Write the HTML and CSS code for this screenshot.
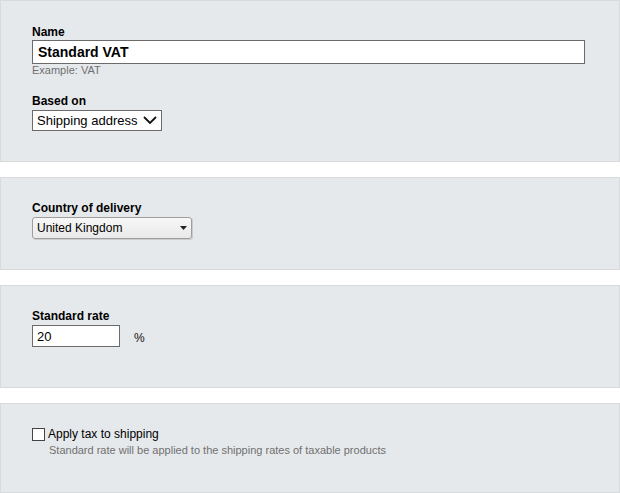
FILE: index.html
```html
<!DOCTYPE html>
<html>
<head>
<meta charset="utf-8">
<link rel="stylesheet" href="styles.css">
</head>
<body>
<section class="panel panel-name">
  <label class="field-label" for="name">Name</label>
  <input class="text-input name-input" id="name" type="text" value="Standard VAT">
  <div class="hint">Example: VAT</div>
  <label class="field-label based-label" for="based">Based on</label>
  <div class="select-wrap plain">
    <select id="based" class="plain-select"><option>Shipping address</option></select>
    <svg class="chev" width="14" height="8" viewBox="0 0 14 8"><path d="M1 1 L7 7 L13 1" fill="none" stroke="#111" stroke-width="1.8"/></svg>
  </div>
</section>

<section class="panel panel-country">
  <label class="field-label" for="country">Country of delivery</label>
  <div class="select-wrap rounded">
    <select id="country" class="round-select"><option>United Kingdom</option></select>
    <svg class="tri" width="7" height="4" viewBox="0 0 7 4"><path d="M0 0 H7 L3.5 4 Z" fill="#222"/></svg>
  </div>
</section>

<section class="panel panel-rate">
  <label class="field-label" for="rate">Standard rate</label>
  <div class="rate-row">
    <input class="text-input rate-input" id="rate" type="text" value="20">
    <span class="pct">%</span>
  </div>
</section>

<section class="panel panel-ship">
  <div class="check-row">
    <input type="checkbox" id="ship" class="check">
    <label for="ship" class="check-label">Apply tax to shipping</label>
  </div>
  <div class="hint ship-hint">Standard rate will be applied to the shipping rates of taxable products</div>
</section>
</body>
</html>
```

FILE: styles.css
```css
html, body {
  margin: 0;
  padding: 0;
  background: #ffffff;
}
body {
  font-family: "Liberation Sans", Arial, sans-serif;
  color: #111;
  width: 620px;
}
.panel {
  box-sizing: border-box;
  border: 1px solid #d9dadb;
  background: #e6e9ec;
  padding: 23px 31px 0 31px;
  margin-bottom: 15px;
  display: flex;
  flex-direction: column;
  align-items: flex-start;
}
.panel-name { height: 162px; padding-top: 24px; }
.panel-country { height: 93px; }
.panel-rate { height: 103px; }
.panel-ship { height: 90px; padding-top: 23px; margin-bottom: 0; }

.field-label {
  display: block;
  font-size: 12px;
  line-height: 14px;
  font-weight: bold;
  margin-bottom: 1px;
  color: #000;
}
.based-label { margin-top: 17px; margin-bottom: 2px; }

.text-input {
  box-sizing: border-box;
  border: 1px solid #6b6b6b;
  background: #fff;
  font-family: "Liberation Sans", Arial, sans-serif;
  outline: none;
  margin: 0;
  border-radius: 0;
}
.name-input {
  width: 553px;
  height: 24px;
  padding: 0 5px;
  font-size: 14px;
  font-weight: bold;
  color: #000;
}
.hint {
  font-size: 11px;
  line-height: 13px;
  color: #707070;
}

.select-wrap { position: relative; }
.plain-select {
  appearance: none;
  -webkit-appearance: none;
  box-sizing: border-box;
  width: 130px;
  height: 21px;
  margin: 0;
  border: 1px solid #6b6b6b;
  border-radius: 0;
  background: #fff;
  font-family: "Liberation Sans", Arial, sans-serif;
  font-size: 13px;
  color: #000;
  padding: 0 0 0 4px;
  outline: none;
}
.chev { position: absolute; left: 111px; top: 6px; }

.panel-country .field-label { margin-bottom: 2px; }
.round-select {
  appearance: none;
  -webkit-appearance: none;
  box-sizing: border-box;
  width: 160px;
  height: 22px;
  margin: 0;
  border: 1px solid #9e9e9e;
  border-radius: 3px;
  background: linear-gradient(#f7f7f7, #e9e9e9);
  box-shadow: 1px 1px 0 rgba(0,0,0,0.12);
  font-family: "Liberation Sans", Arial, sans-serif;
  font-size: 12px;
  color: #000;
  padding: 0 0 0 4px;
  outline: none;
}
.tri { position: absolute; left: 148px; top: 9px; }

.panel-rate .field-label { margin-bottom: 2px; }
.rate-row {
  display: flex;
  align-items: center;
}
.rate-input {
  width: 88px;
  height: 22px;
  padding: 0 4px;
  font-size: 13px;
  color: #000;
}
.pct {
  font-size: 12px;
  margin-left: 14px;
  padding-top: 4px;
}

.check-row {
  display: flex;
  align-items: center;
}
.check {
  appearance: none;
  -webkit-appearance: none;
  box-sizing: border-box;
  width: 13px;
  height: 13px;
  margin: 0 3px 0 0;
  border: 1px solid #444;
  background: #fff;
  border-radius: 0;
}
.check-label {
  font-size: 12px;
  line-height: 14px;
  color: #000;
}
.ship-hint {
  margin-top: 3px;
  margin-left: 17px;
}
```
